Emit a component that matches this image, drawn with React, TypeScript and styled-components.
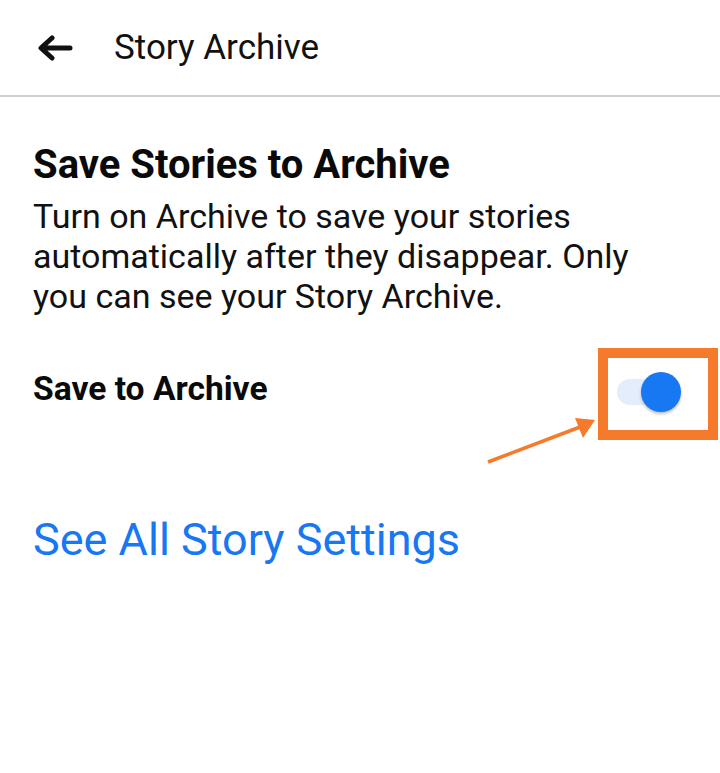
import styled, { createGlobalStyle } from 'styled-components';

const GlobalStyle = createGlobalStyle`
  body {
    margin: 0;
    background: #fff;
    font-family: Roboto, 'Noto Sans', sans-serif;
    color: #0a0a0a;
  }
`;

const Page = styled.div`
  width: 720px;
  height: 773px;
  background: #fff;
  overflow: hidden;
`;

const Header = styled.div`
  display: flex;
  align-items: center;
  height: 97px;
  border-bottom: 2px solid #d0d0d0;
  box-sizing: border-box;
  padding: 0 0 0 38px;
  h1 {
    margin: 0 0 0 41px;
    font-size: 35px;
    font-weight: 400;
    color: #111;
  }
`;

const Content = styled.div`
  padding: 0 33px;
`;

const SectionTitle = styled.h2`
  margin: 44px 0 0;
  font-size: 40px;
  font-weight: 700;
  line-height: 48px;
`;

const Description = styled.p`
  margin: 7px 0 0;
  max-width: 620px;
  font-size: 34px;
  line-height: 40px;
  color: #111;
`;

const Row = styled.div`
  display: flex;
  justify-content: space-between;
  align-items: flex-start;
  margin: 32px -31px 0 0;
  span {
    margin-top: 21px;
    font-size: 33.6px;
    line-height: 40px;
    font-weight: 700;
  }
`;

const Highlight = styled.div`
  position: relative;
  display: flex;
  align-items: flex-start;
  width: 120px;
  height: 92px;
  box-sizing: border-box;
  padding: 21px 0 0 9px;
  border: 10px solid #f67a2b;
`;

const Toggle = styled.div<{ on: boolean }>`
  position: relative;
  width: 48px;
  height: 26px;
  border-radius: 13px;
  background: ${(p) => (p.on ? '#e3edfc' : '#ddd')};
  &::after {
    content: '';
    position: absolute;
    top: -7px;
    left: ${(p) => (p.on ? '24px' : '-14px')};
    width: 40px;
    height: 40px;
    border-radius: 50%;
    background: #1877f2;
    box-shadow: 0 2px 3px rgba(0, 0, 0, 0.25);
  }
`;

const Arrow = styled.svg`
  position: absolute;
  left: -120px;
  top: 57px;
  overflow: visible;
`;

const Link = styled.a`
  display: block;
  margin-top: 74px;
  font-size: 45px;
  line-height: 52px;
  color: #1877f2;
  text-decoration: none;
`;

export default function App() {
  return (
    <Page>
      <GlobalStyle />
      <Header>
        <svg width='35' height='26' viewBox='0 0 35 26'>
          <path
            d='M32 13H6M14 3 3 13l11 10'
            fill='none'
            stroke='#111'
            strokeWidth='5'
            strokeLinecap='round'
            strokeLinejoin='round'
          />
        </svg>
        <h1>Story Archive</h1>
      </Header>
      <Content>
        <SectionTitle>Save Stories to Archive</SectionTitle>
        <Description>
          Turn on Archive to save your stories automatically after they
          disappear. Only you can see your Story Archive.
        </Description>
        <Row>
          <span>Save to Archive</span>
          <Highlight>
            <Toggle on />
            <Arrow width='110' height='50'>
              <path d='M0 47 L92 12' stroke='#f67a2b' strokeWidth='3.5' />
              <polygon points='107,5 87,3 95,23' fill='#f67a2b' />
            </Arrow>
          </Highlight>
        </Row>
        <Link href='#'>See All Story Settings</Link>
      </Content>
    </Page>
  );
}
